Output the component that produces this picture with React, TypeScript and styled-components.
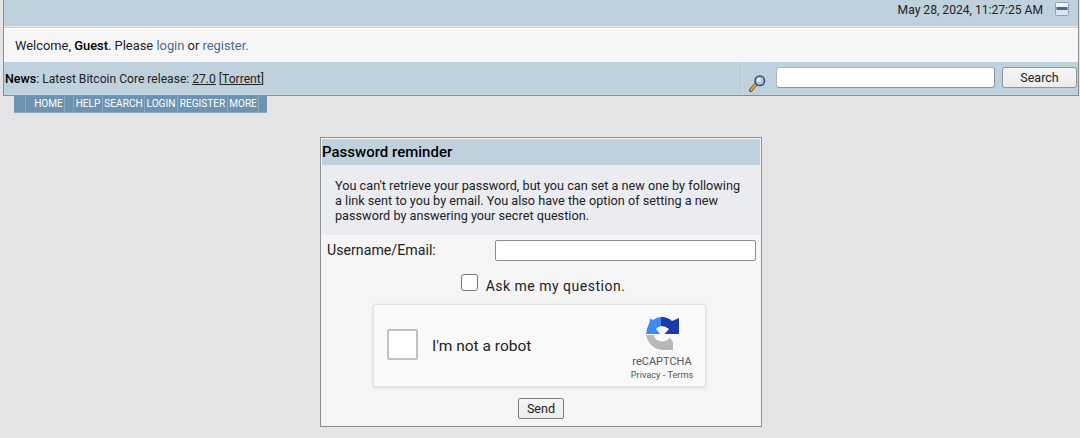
import styled, { createGlobalStyle } from 'styled-components';

const GlobalStyle = createGlobalStyle`
  html, body {
    margin: 0;
    padding: 0;
    background: #e5e5e8;
    font-family: Roboto, "Liberation Sans", sans-serif;
    color: #000;
  }
`;

const Page = styled.div`
  width: 1080px;
  height: 438px;
  overflow: hidden;
`;

const Header = styled.div`
  box-sizing: border-box;
  width: 1076px;
  height: 96px;
  margin-left: 3px;
  border: 1px solid #8a8f94;
  border-top: 0;
  background: #bfd1dd;
`;

const TopBar = styled.div`
  height: 27px;
  box-sizing: border-box;
  display: flex;
  justify-content: flex-end;
  padding-right: 9px;
  border-bottom: 1px solid #e4ebf0;
`;

const DateText = styled.span`
  font-size: 12.1px;
  line-height: 21px;
  color: #222;
  margin-right: 12px;
`;

const Collapse = styled.svg`
  width: 14px;
  height: 14px;
  margin-top: 2px;
`;

const Welcome = styled.div`
  height: 34px;
  box-sizing: border-box;
  margin-top: 1px;
  padding-left: 11px;
  background: #f6f6f7;
  font-size: 12.9px;
  line-height: 33px;
  color: #222;
  border-top: 1px solid #fff;

  b {
    font-weight: 500;
    color: #000;
  }

  a {
    color: #476c8e;
    text-decoration: none;
  }
`;

const NewsBar = styled.div`
  display: flex;
  height: 33px;
`;

const News = styled.div`
  flex: 1;
  padding-left: 1px;
  font-size: 12.1px;
  line-height: 33px;
  color: #222;

  b {
    font-weight: 500;
    font-size: 12.5px;
    color: #000;
  }

  a {
    color: #222;
    text-decoration: underline;
  }
`;

const SearchArea = styled.div`
  width: 336px;
  box-sizing: border-box;
  display: flex;
  align-items: flex-start;
  border-left: 1px solid #cfdde6;
  padding: 5px 0 0 6px;
`;

const Magnifier = styled.svg`
  width: 18px;
  height: 18px;
  margin: 7px 9px 0 0;
  flex: none;
`;

const SearchInput = styled.input`
  box-sizing: border-box;
  width: 219px;
  height: 21px;
  padding: 0;
  background: #fff;
  border: 1px solid #8a949c;
  border-radius: 3px;
  margin-right: 7px;
  border-color: #aab4bc #8a949c #8a949c #aab4bc;
`;

const PlainButton = styled.button`
  box-sizing: border-box;
  font-family: Roboto, "Liberation Sans", sans-serif;
  font-size: 12.5px;
  color: #222;
  padding: 0;
  background: linear-gradient(#f6f6f6, #ececec);
  cursor: pointer;
`;

const SearchButton = styled(PlainButton)`
  width: 75px;
  height: 21px;
  border: 1px solid #8f9599;
  border-radius: 3px;
`;

const NavStrip = styled.ul`
  display: flex;
  width: 253px;
  height: 17px;
  box-sizing: border-box;
  margin: 0 0 0 14px;
  padding: 0 0 0 11px;
  list-style: none;
  background: #6c94b2;
  border-bottom: 1px solid #8aa9c1;
`;

const NavItem = styled.li<{ $width: number; $inset: number }>`
  box-sizing: border-box;
  width: ${(p) => p.$width}px;
  padding-left: ${(p) => p.$inset}px;
  text-align: center;
  font-size: 10.1px;
  line-height: 16px;
  color: #fff;
  border-left: 1px solid #88a9c2;
  white-space: nowrap;
`;

const ReminderBox = styled.div`
  box-sizing: border-box;
  width: 442px;
  height: 290px;
  margin: 24px 0 0 320px;
  padding: 1px;
  border: 1px solid #8a8f94;
  background: #f5f5f6;
`;

const TitleBar = styled.h3`
  margin: 0;
  height: 26px;
  background: #bfd1dd;
  font-size: 15px;
  font-weight: 500;
  line-height: 26px;
  color: #000;
`;

const Description = styled.p`
  margin: 0;
  height: 70px;
  box-sizing: border-box;
  padding: 13px 12px 0 13px;
  background: #eaecf2;
  font-size: 12.7px;
  line-height: 15px;
  color: #222;
`;

const FieldRow = styled.div`
  display: flex;
  align-items: center;
  height: 31px;
  padding-left: 5px;
`;

const FieldLabel = styled.label`
  width: 168px;
  padding-bottom: 2px;
  font-size: 14.2px;
  color: #222;
`;

const TextInput = styled.input`
  box-sizing: border-box;
  width: 261px;
  height: 21px;
  padding: 0;
  background: #fff;
  border: 1px solid #8a8f94;
  border-radius: 2px;
`;

const AskRow = styled.div`
  display: flex;
  justify-content: center;
  height: 38px;
  padding-top: 7px;
  box-sizing: border-box;
  padding-left: 4px;
`;

const AskBox = styled.span`
  box-sizing: border-box;
  width: 17px;
  height: 17px;
  margin-top: 1px;
  background: #fff;
  border: 1px solid #767676;
  border-radius: 3px;
`;

const AskLabel = styled.span`
  margin-left: 8px;
  margin-top: 3px;
  font-size: 14px;
  letter-spacing: 0.5px;
  line-height: 20px;
  color: #222;
`;

const CaptchaCard = styled.div`
  box-sizing: border-box;
  display: flex;
  width: 333px;
  height: 83px;
  margin-left: 51px;
  background: #f9f9f9;
  border: 1px solid #e2e2e2;
  border-radius: 3px;
  box-shadow: 0 1px 3px rgba(0, 0, 0, 0.12);
`;

const CaptchaBox = styled.span`
  box-sizing: border-box;
  width: 31px;
  height: 31px;
  margin: 24px 0 0 13px;
  background: #fff;
  border: 2px solid #c1c1c1;
  border-radius: 2px;
`;

const CaptchaText = styled.span`
  width: 197px;
  margin-left: 14px;
  font-size: 15.5px;
  line-height: 82px;
  color: #222;
`;

const CaptchaBrand = styled.div`
  width: 66px;
  display: flex;
  flex-direction: column;
  align-items: center;
  padding-top: 12px;
`;

const CaptchaLogo = styled.svg`
  width: 33px;
  height: 33px;
`;

const CaptchaName = styled.span`
  margin-top: 5px;
  font-size: 11px;
  line-height: 14px;
  color: #555;
`;

const CaptchaLinks = styled.span`
  font-size: 9.2px;
  line-height: 11px;
  color: #555;
  white-space: nowrap;
`;

const SendRow = styled.div`
  display: flex;
  justify-content: center;
  padding-top: 11px;
`;

const SendButton = styled(PlainButton)`
  width: 46px;
  height: 21px;
  font-size: 12.6px;
  border: 1px solid #7c7c7c;
  border-radius: 2px;
`;

const navItems = [
  { label: 'HOME', width: 39, inset: 7 },
  { label: '', width: 9, inset: 0 },
  { label: 'HELP', width: 29, inset: 0 },
  { label: 'SEARCH', width: 42, inset: 0 },
  { label: 'LOGIN', width: 33, inset: 0 },
  { label: 'REGISTER', width: 50, inset: 0 },
  { label: 'MORE', width: 31, inset: 0 },
  { label: '', width: 9, inset: 0 },
];

const App = () => {
  return (
    <Page>
      <GlobalStyle />
      <Header>
        <TopBar>
          <DateText>May 28, 2024, 11:27:25 AM</DateText>
          <Collapse viewBox="0 0 14 14">
            <rect x="0.5" y="0.5" width="13" height="13" rx="1" fill="#d8e4ee" stroke="#8da3b5" />
            <rect x="1" y="1" width="12" height="4" fill="#eef4f8" />
            <rect x="1.5" y="5" width="11" height="3" fill="#3f6a96" />
          </Collapse>
        </TopBar>
        <Welcome>
          Welcome, <b>Guest</b>. Please <a href="#">login</a> or <a href="#">register.</a>
        </Welcome>
        <NewsBar>
          <News>
            <b>News</b>: Latest Bitcoin Core release: <a href="#">27.0</a> [<a href="#">Torrent</a>]
          </News>
          <SearchArea>
            <Magnifier viewBox="0 0 20 20">
              <path d="M2 18 L8 11" stroke="#6b4a1e" strokeWidth="4" strokeLinecap="round" />
              <path d="M2.3 17.6 L7.6 11.4" stroke="#e0a24a" strokeWidth="2.4" strokeLinecap="round" />
              <circle cx="12" cy="7.5" r="5.3" fill="#a9c3e6" stroke="#3f4f60" strokeWidth="1.7" />
              <circle cx="11.2" cy="6.6" r="2.2" fill="#e8f0fa" />
            </Magnifier>
            <SearchInput type="text" />
            <SearchButton type="button">Search</SearchButton>
          </SearchArea>
        </NewsBar>
      </Header>
      <NavStrip>
        {navItems.map((item, index) => (
          <NavItem $width={item.width} $inset={item.inset} key={index}>
            {item.label}
          </NavItem>
        ))}
      </NavStrip>
      <ReminderBox>
        <TitleBar>Password reminder</TitleBar>
        <Description>
          You can't retrieve your password, but you can set a new one by following a link sent to you by email. You
          also have the option of setting a new password by answering your secret question.
        </Description>
        <FieldRow>
          <FieldLabel>Username/Email:</FieldLabel>
          <TextInput type="text" />
        </FieldRow>
        <AskRow>
          <AskBox />
          <AskLabel>Ask me my question.</AskLabel>
        </AskRow>
        <CaptchaCard>
          <CaptchaBox />
          <CaptchaText>I'm not a robot</CaptchaText>
          <CaptchaBrand>
            <CaptchaLogo viewBox="0 0 33 33">
              <path d="M15 0 Q22 0 26 4 L33 1 V17 H18.5 L23 12 Q19.5 9 15 9 Z" fill="#1c3aa9" />
              <path d="M15 0 V9 Q12 9.5 10 12 L14 17 H0 Q0.5 11 3.5 5.5 L4 1.5 L7 3 Q11 0.2 15 0 Z" fill="#3d8bf2" />
              <path d="M0 18 H8 Q9 24 16 24.5 Q21 24.5 24 20.5 L27 25 V33 H18 Q4 33 0 18 Z" fill="#b8b8b8" />
            </CaptchaLogo>
            <CaptchaName>reCAPTCHA</CaptchaName>
            <CaptchaLinks>Privacy - Terms</CaptchaLinks>
          </CaptchaBrand>
        </CaptchaCard>
        <SendRow>
          <SendButton type="button">Send</SendButton>
        </SendRow>
      </ReminderBox>
    </Page>
  );
};

export default App;
